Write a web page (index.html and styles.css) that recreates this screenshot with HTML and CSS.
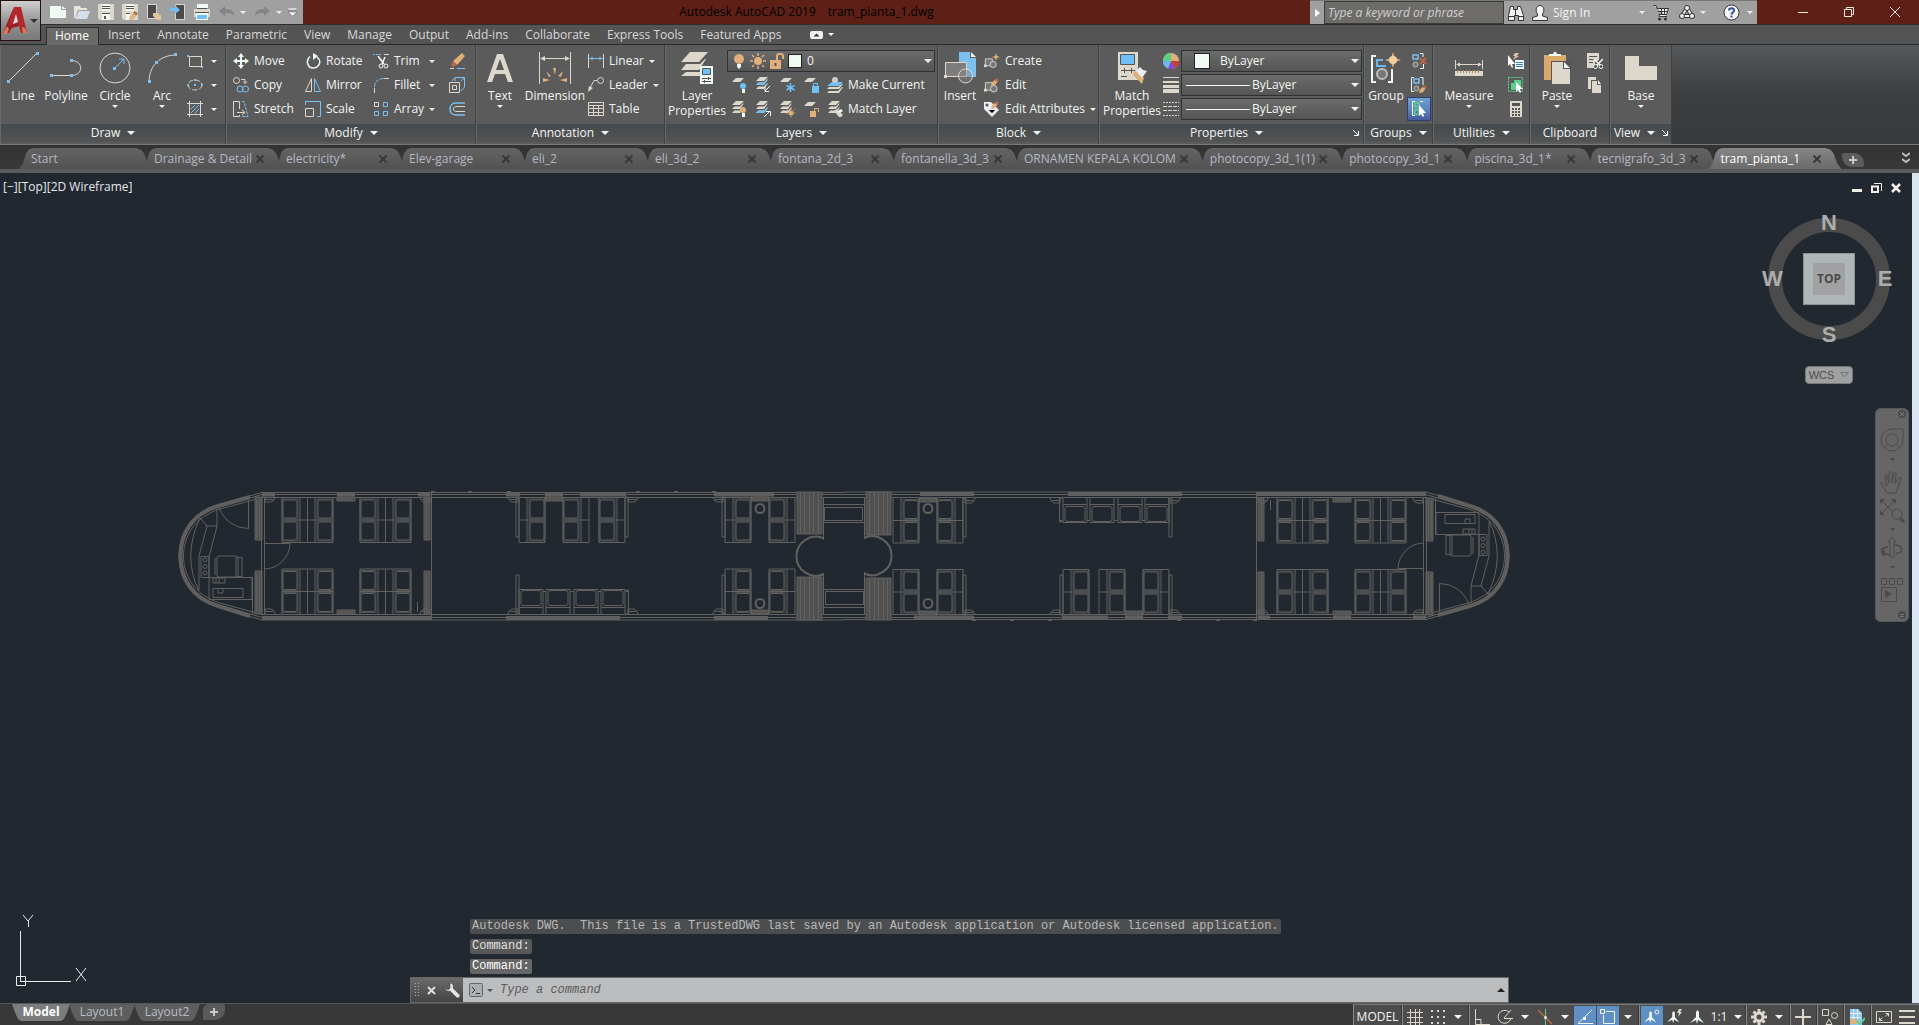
FILE: index.html
```html
<!DOCTYPE html>
<html lang="en">
<head>
    <meta charset="UTF-8">
    <title>Autodesk AutoCAD 2019 - tram_pianta_1.dwg</title>
    <link rel="stylesheet" href="styles.css">
</head>
<body>
    <!-- shared symbols -->
    <svg class="defs" aria-hidden="true">
        <defs>
            <symbol id="sheets" viewBox="0 0 16 16">
                <path fill="#ded7cb" d="M5 0h8L9 4H1zM3.500 5.500H9l3-3h1L9 8H1zM3.500 9.500H9l3-3h1L9 12H1z"/>
            </symbol>
            <symbol id="sheet" viewBox="0 0 16 16"><path fill="#ded7cb" d="M5 1h8L9 5H1z"/></symbol>
            <symbol id="blockbase" viewBox="0 0 16 16">
                <path fill="#777" stroke="#ded7cb" d="M1.500 13.500v-8h8v8z"/><circle cx="10.500" cy="12" r="3.500" fill="#777" stroke="#ded7cb"/><path fill="#ded7cb" d="M0 12h3v3H0z"/>
            </symbol>
            <symbol id="pencil" viewBox="0 0 8 8"><path fill="#b5694a" d="M5 0l3 2-1.500 2-3-2z"/><path fill="#e0b07c" d="M3.500 2l3 2-3 3.500L0 8l.8-3z"/></symbol>
            <symbol id="gbase" viewBox="0 0 16 16">
                <path fill="none" stroke="#7cc0f2" stroke-width="1.500" d="M3 2h5v4H3z"/><circle cx="5.500" cy="11.500" r="2.500" fill="#777" stroke="#bbb"/>
            </symbol>
            <symbol id="person" viewBox="0 0 16 16">
                <path fill="#eefaf2" d="M7.500 1L9 3v5l5 6-6-3-1 4-1-4-6 3 6-6V3z"/>
            </symbol>
        </defs>
    </svg>

    <header class="titlebar">
        <button class="app-button" aria-label="Application menu">
            <svg width="26" height="28" viewBox="0 0 26 28"><path fill="#b3272c" d="M11 0h7l6 26h-6l-2-7-7 2-3 5H0z"/><path fill="#dcdcdc" d="M13 7l2 8-5 2z"/><path fill="#801a1c" d="M11 0l-4 12-2 7 10-3v3l-7 2-3 5H0z" opacity=".6"/><path fill="#d97c5c" d="M1 24l3-5 2 3-2 5H0zM19 20l3 1 2 5h-4z"/></svg>
            <span class="caret"></span>
        </button>
        <div class="quick-access">
            <button aria-label="New"><svg width="16" height="16"><path fill="#eefaf2" d="M0 2h11v4h5v8H0z"/><path fill="#eefaf2" d="M12 2l4 3h-4z"/></svg></button>
            <button aria-label="Open"><svg width="16" height="16"><path fill="#e8e4dc" d="M0 2h6l1 2h6v2H4L1 14H0z"/><path fill="#d5dfec" d="M5 7h11l-3 8H1z"/></svg></button>
            <button aria-label="Save"><svg width="16" height="16"><path fill="#ded7cb" d="M0 0h16v16H2l-2-2z"/><path fill="#eefaf2" d="M4 0h8v7H4zM4 10h8v6H4z"/><path stroke="#555" fill="none" d="M4 2.500h8M4 4.500h8M4 9.500h8"/><path fill="#555" d="M6 12h2v3H6z"/></svg></button>
            <button aria-label="Save As"><svg width="16" height="16"><path fill="#ded7cb" d="M0 0h16v16H2l-2-2z"/><path fill="#eefaf2" d="M4 0h8v7H4zM4 10h4v6H4z"/><path stroke="#555" fill="none" d="M4 2.500h8M4 4.500h8M4 9.500h4"/><use href="#pencil" x="7" y="7" width="9" height="9"/></svg></button>
            <button aria-label="Open from mobile"><svg width="16" height="16"><path fill="#4a4a4a" stroke="#ded7cb" d="M1.500.5h9v14h-9z"/><path fill="#e0c59c" d="M7 9h6v2h2v5h-4l-4-4z"/></svg></button>
            <button aria-label="Save to mobile"><svg width="16" height="16"><path fill="#4a4a4a" stroke="#ded7cb" d="M5.500.5h9v15h-9z"/><path fill="#6fc0f7" d="M0 4h5V1l5 5-5 4V7H0z"/></svg></button>
            <button aria-label="Plot"><svg width="16" height="16"><path fill="#eefaf2" d="M3 0h11v4H3z"/><path fill="#ded7cb" d="M0 5h16v8H0z"/><path fill="#eefaf2" d="M2 9h12v7H2z"/><path fill="#6fc0f7" d="M3 11h10v4H3z"/><path stroke="#555" d="M1 8.500h14M3 4.500h10"/></svg></button>
            <button aria-label="Undo" class="wide"><svg width="16" height="16"><path fill="#858585" d="M0 7l6-5v3c6 0 9 2 9 7-2-3-5-3-9-3v3z"/></svg><span class="caret pale"></span></button>
            <button aria-label="Redo" class="wide"><svg width="16" height="16"><path fill="#858585" d="M15 7L9 2v3c-6 0-9 2-9 7 2-3 5-3 9-3v3z"/></svg><span class="caret pale"></span></button>
            <button aria-label="Customize" class="custom"><svg width="9" height="9"><path fill="#fff" stroke="#555" stroke-width=".5" d="M0 0h9v2H0zM0 4h9L4.500 8z"/></svg></button>
        </div>
        <h1 class="title"><span>Autodesk AutoCAD 2019</span><span>tram_pianta_1.dwg</span></h1>
        <div class="infocenter">
            <button class="collapse" aria-label="Collapse search"><svg width="5" height="8"><path fill="#fff" d="M0 0l5 4-5 4z"/></svg></button>
            <input type="text" placeholder="Type a keyword or phrase" aria-label="Search">
            <button aria-label="Search"><svg width="18" height="16"><path fill="#f2f2f2" stroke="#333" d="M3.500 1.500h3v3h4v-3h3l3 9v5h-5v-5h-4v5h-6v-5z"/><path fill="none" stroke="#333" d="M2 11.500h5M12 11.500h4M8.500 4v6"/></svg></button>
            <button class="signin"><svg width="16" height="16"><path fill="#f2f2f2" stroke="#333" d="M5.500 9C3 6 4 .5 8 .5s5 5.500 2.500 8.500v2l5 1.500v3H.5v-3l5-1.500z"/></svg><span>Sign In</span><span class="caret pale"></span></button>
            <button aria-label="App Store"><svg width="16" height="16"><path fill="#f2f2f2" stroke="#333" d="M.5.500H3l1 3h11.500l-2 6H6l.5 2H14"/><path stroke="#333" d="M5 6.500h9M8.500 4v5M11.500 4v5"/><circle cx="6.500" cy="14" r="1.500" fill="#333"/><circle cx="12.500" cy="14" r="1.500" fill="#333"/></svg></button>
            <button class="connect" aria-label="Stay connected"><svg width="16" height="16"><path fill="none" stroke="#333" stroke-width="4" d="M8 3L3 11h10z"/><path fill="none" stroke="#f2f2f2" stroke-width="2" d="M8 3L3 11h10z"/><g fill="#f2f2f2" stroke="#333"><circle cx="8" cy="3" r="2.500"/><circle cx="3" cy="11" r="2.500"/><circle cx="13" cy="11" r="2.500"/></g></svg><span class="caret pale"></span></button>
            <button class="help" aria-label="Help"><svg width="17" height="17"><circle cx="8.500" cy="8.500" r="7.500" fill="#f4f7fa" stroke="#333"/><path fill="none" stroke="#3b4f8f" stroke-width="2" d="M6 6.500c0-3 5-3 5 0 0 2-2.500 2-2.500 4M8.500 11.500v2"/></svg><span class="caret pale"></span></button>
        </div>
        <div class="window-buttons">
            <button aria-label="Minimize"><svg width="10" height="10"><path stroke="#f2e9e4" d="M0 5.500h10"/></svg></button>
            <button aria-label="Restore"><svg width="10" height="10"><path fill="none" stroke="#f2e9e4" d="M.5 2.500h7v7h-7zM2.500 2V.500h7v7H8"/></svg></button>
            <button aria-label="Close"><svg width="10" height="10"><path stroke="#f2e9e4" d="M0 0l10 10M10 0L0 10"/></svg></button>
        </div>
    </header>

    <nav class="menu">
        <a href="#" class="active">Home</a>
        <a href="#">Insert</a>
        <a href="#">Annotate</a>
        <a href="#">Parametric</a>
        <a href="#">View</a>
        <a href="#">Manage</a>
        <a href="#">Output</a>
        <a href="#">Add-ins</a>
        <a href="#">Collaborate</a>
        <a href="#">Express Tools</a>
        <a href="#">Featured Apps</a>
        <button aria-label="Minimize ribbon"><svg width="13" height="8"><rect width="13" height="8" rx="2" fill="#eee"/><path fill="#333" d="M3.500 5.500l3-3 3 3z"/></svg><span class="caret"></span></button>
    </nav>

    <section class="ribbon">
        <div class="panel draw">
            <div class="panel-body">
                <button class="big"><svg width="32" height="32"><path stroke="#ded7cb" d="M2 29L29 2"/><path fill="#7cc0f2" d="M0 28h3v3H0zM29 0h3v3h-3z"/></svg>Line</button>
                <button class="big"><svg width="32" height="32"><path fill="none" stroke="#ded7cb" d="M2 23.500h19M21 8.500c13 0 13 15 0 15"/><path fill="#7cc0f2" d="M0 22h3v3H0zM20 22h3v3h-3zM20 7h3v3h-3z"/></svg>Polyline</button>
                <button class="big"><svg width="32" height="32"><circle cx="16" cy="16" r="15" fill="none" stroke="#ded7cb"/><path stroke="#7cc0f2" fill="none" d="M16 16l9-9M20 7h5v5"/><path fill="#7cc0f2" d="M14 15h3v3h-3z"/></svg>Circle<span class="caret"></span></button>
                <button class="big"><svg width="32" height="32"><path fill="none" stroke="#ded7cb" d="M3 30C3 14 14 3 30 3"/><path fill="#7cc0f2" d="M2 28h3v3H2zM9 9h3v3H9zM28 1h3v3h-3z"/></svg>Arc<span class="caret"></span></button>
                <div class="stack">
                    <button class="small" aria-label="Rectangle"><svg width="16" height="16"><path fill="none" stroke="#ded7cb" d="M2.500 3.500h12v10h-12z"/><path fill="#7cc0f2" d="M0 2h2v2H0zM14 13h2v2h-2z"/></svg><span class="caret"></span></button>
                    <button class="small" aria-label="Ellipse"><svg width="16" height="16"><ellipse cx="8" cy="8" rx="7" ry="5" fill="none" stroke="#ded7cb" stroke-dasharray="5 2"/><path fill="#7cc0f2" d="M0 7h2v2H0zM7 7h2v2H7zM14 7h2v2h-2zM7 2h2v2H7z"/></svg><span class="caret"></span></button>
                    <button class="small" aria-label="Hatch"><svg width="16" height="16"><path stroke="#ded7cb" d="M0 2.500h16M0 13.500h16M2.500 0v16M13.500 0v16"/><path stroke="#7cc0f2" d="M4 8l4-4M4 12l8-8M8 12l4-4"/></svg><span class="caret"></span></button>
                </div>
            </div>
            <h2>Draw<span class="caret wide-caret"></span></h2>
        </div>

        <div class="panel modify">
            <div class="panel-body">
                <button class="small"><svg width="16" height="16"><path stroke="#eefaf2" stroke-width="2" d="M8 2v12M2 8h12"/><path fill="#eefaf2" d="M8 0l3 4H5zM8 16l3-4H5zM0 8l4-3v6zM16 8l-4-3v6z"/></svg>Move</button>
                <button class="small"><svg width="16" height="16"><path fill="none" stroke="#eefaf2" stroke-width="1.500" d="M12 4c6 5 1 11-4 11S0 8 5 3.500"/><path fill="#eefaf2" d="M8 0l5 3-5 4z"/></svg>Rotate</button>
                <button class="small"><svg width="16" height="16"><path stroke="#7cc0f2" stroke-dasharray="2 1" d="M0 1.500h9"/><path stroke="#ded7cb" d="M11 1.500h5"/><path stroke="#eefaf2" stroke-width="1.500" fill="none" d="M5 3l6 8M12 4l-3 7"/><circle cx="8" cy="13" r="2" fill="none" stroke="#eefaf2"/><circle cx="13" cy="13" r="2" fill="none" stroke="#eefaf2"/></svg>Trim<span class="caret"></span></button>
                <button class="small" aria-label="Erase"><svg width="16" height="16"><path fill="#e0b07c" d="M13 0l3 3-8 9-4-4z"/><path fill="#b5694a" d="M4 8l4 4-4 2-2-2z"/><path stroke="#ded7cb" d="M1 15.500h4"/><path stroke="#7cc0f2" d="M8 15.500h8"/></svg></button>

                <button class="small"><svg width="16" height="16"><g fill="none" stroke="#ded7cb"><circle cx="3.500" cy="3.500" r="3"/><path d="M8 2.500h4v4M10 4.500l2 2 2-2"/></g><g fill="none" stroke="#7cc0f2"><circle cx="7" cy="12" r="3"/><circle cx="12.500" cy="12" r="3"/></g></svg>Copy</button>
                <button class="small"><svg width="16" height="16"><path fill="none" stroke="#ded7cb" d="M6.500 1.500v13h-6z"/><path fill="none" stroke="#7cc0f2" d="M9.500 1.500v13h6z"/></svg>Mirror</button>
                <button class="small"><svg width="16" height="16"><path fill="none" stroke="#ded7cb" d="M1.500 16v-5M11 1.500h5"/><path fill="none" stroke="#7cc0f2" d="M1.500 10c0-5 3-8 9-8.500" stroke-dasharray="4 1"/></svg>Fillet<span class="caret"></span></button>
                <button class="small" aria-label="Explode"><svg width="16" height="16"><path fill="none" stroke="#7cc0f2" d="M3 4l3-3.500h9.500V10L12 14M12 4l3-3M6 1v3"/><path fill="none" stroke="#ded7cb" d="M.5 5.500h10v10H.5zM3.500 8.500h4v4h-4z"/></svg></button>

                <button class="small"><svg width="16" height="16"><path fill="none" stroke="#ded7cb" d="M6.500 8V.500h-6v15h6V14M4 11.500h7M9 9l3 2.500L9 14"/><path fill="none" stroke="#7cc0f2" d="M9 .5h2l4 15H8" stroke-dasharray="3 1"/></svg>Stretch</button>
                <button class="small"><svg width="16" height="16"><path fill="none" stroke="#7cc0f2" d="M.5 4V.500h15v15H12"/><path fill="none" stroke="#ded7cb" d="M.5 7.500h8v8h-8z"/></svg>Scale</button>
                <button class="small"><svg width="16" height="16"><path fill="none" stroke="#ded7cb" d="M1.500 1.500h4v4h-4z"/><path fill="none" stroke="#7cc0f2" d="M10.500 1.500h4v4h-4zM1.500 10.500h4v4h-4zM10.500 10.500h4v4h-4z"/></svg>Array<span class="caret"></span></button>
                <button class="small" aria-label="Offset"><svg width="16" height="16"><path fill="none" stroke="#7cc0f2" stroke-width="1.500" d="M16 2H7C-1 2-1 14 7 14h9"/><path fill="none" stroke="#ded7cb" d="M16 5.500H8c-5 0-5 5 0 5h8"/></svg></button>
            </div>
            <h2>Modify<span class="caret wide-caret"></span></h2>
        </div>

        <div class="panel annotation">
            <div class="panel-body">
                <button class="big"><svg width="32" height="32"><path fill="#ded7cb" d="M13 2h6l10 28h-5l-3-8H11l-3 8H3zM16 7l-4 11h8z"/></svg>Text<span class="caret"></span></button>
                <button class="big"><svg width="32" height="32"><path stroke="#ded7cb" d="M.5 0v32M31.500 0v32M2 6.500h28"/><path fill="#ded7cb" d="M1 6.500L6 4v5zM31 6.500L26 4v5z"/><path fill="#e0b07c" d="M14 16h3l-1 7zM7 19l5 5-2 1zM24 19l-5 5 3 1zM4 26l7 2-7 2zM28 26l-7 2 7 2z"/></svg>Dimension</button>
                <div class="stack">
                    <button class="small"><svg width="16" height="16"><path stroke="#ded7cb" d="M.5 1v14M15.500 1v14"/><path stroke="#7cc0f2" d="M1 5.500h14M4 3.500v4M12 3.500v4"/></svg>Linear<span class="caret"></span></button>
                    <button class="small"><svg width="16" height="16"><circle cx="12.500" cy="3.500" r="3" fill="none" stroke="#ded7cb"/><path fill="none" stroke="#ded7cb" d="M9 3.500H6L2 11"/><path fill="#ded7cb" d="M0 15l1-6 4 2z"/></svg>Leader<span class="caret"></span></button>
                    <button class="small"><svg width="16" height="16"><path fill="none" stroke="#ded7cb" d="M.5 1.500h15v13H.5zM0 4.500h16M0 7.500h16M0 11.500h16M5.500 4v10M10.500 4v10"/></svg>Table</button>
                </div>
            </div>
            <h2>Annotation<span class="caret wide-caret"></span></h2>
        </div>

        <div class="panel layers">
            <div class="panel-body">
                <button class="big"><svg width="32" height="32"><path fill="#ded7cb" d="M9 0h18l-9 10H0zM5 12h14l5-5h1L18 18H0zM5 20h14v4H0z"/><path fill="#eefaf2" d="M19 14h13v18H19z"/><path fill="#6fc0f7" stroke="#555" d="M21.500 16.500h8v6h-8z"/><path stroke="#555" fill="none" d="M21 26.500h9M21 29.500h9M27.500 25v3M23.500 28v3"/></svg>Layer<br>Properties</button>
                <div class="layer-tools">
                    <label class="combo">
                        <svg width="16" height="16"><circle cx="8" cy="6" r="5" fill="#e0b07c"/><path fill="#eefaf2" d="M6 11h4v3l-2 2-2-2z"/></svg>
                        <svg width="16" height="16"><circle cx="8" cy="8" r="4" fill="#e0b07c"/><path stroke="#e0b07c" stroke-width="1.500" d="M8 0v3M8 13v3M0 8h3M13 8h3M2 2l2 2M12 12l2 2M14 2l-2 2M4 12l-2 2"/></svg>
                        <svg width="16" height="16"><path fill="#e0b07c" d="M1 7h11v9H1z"/><path fill="none" stroke="#e0b07c" stroke-width="2" d="M8 7V3c0-3 6-3 6 0v3"/><path stroke="#555" stroke-width="2" d="M6.500 10v3"/></svg>
                        <i class="swatch"></i>
                        <select aria-label="Layer"><option>0</option></select>
                        <span class="caret wide-caret"></span>
                    </label>
                    <div class="icon-row">
                        <button aria-label="Layer off"><svg width="16" height="16"><use href="#sheet" width="16" height="16"/><circle cx="12" cy="9" r="3" fill="#6fc0f7"/><path fill="#eefaf2" d="M11 12h3v4h-3z"/></svg></button>
                        <button aria-label="Isolate"><svg width="16" height="16"><use href="#sheets" width="16" height="16"/><path fill="#6fc0f7" d="M3.500 5.500H9l3-3h1L9 8H1z"/><path fill="none" stroke="#eefaf2" d="M15 9l-5 5M10 10v4.500h4"/></svg></button>
                        <button aria-label="Freeze"><svg width="16" height="16"><use href="#sheet" width="16" height="16"/><path stroke="#6fc0f7" stroke-width="1.500" d="M11.500 6v9M7.500 8.500l8 4.500M15.500 8.500l-8 4.500"/></svg></button>
                        <button aria-label="Lock"><svg width="16" height="16"><use href="#sheet" width="16" height="16"/><path fill="#6fc0f7" d="M9 9h7v7H9z"/><path fill="none" stroke="#6fc0f7" d="M10.500 9V6.500h4V9"/></svg></button>
                        <button class="labelled"><svg width="16" height="16"><path fill="#6fc0f7" d="M5 5h11l-4 4H0z"/><path fill="#ded7cb" d="M2 10h9l4-3h1l-4 5H0zM2 14h9l4-4h1l-4 6H0z"/><circle cx="8" cy="3" r="3" fill="#ccc"/></svg>Make Current</button>
                    </div>
                    <div class="icon-row">
                        <button aria-label="Layers on"><svg width="16" height="16"><use href="#sheets" width="16" height="16"/><circle cx="12" cy="9" r="3" fill="#e0b07c"/><path fill="#eefaf2" d="M11 12h3v4h-3z"/></svg></button>
                        <button aria-label="Unisolate"><svg width="16" height="16"><use href="#sheets" width="16" height="16"/><path fill="#6fc0f7" d="M3.500 9.500H9l3-3h1L9 12H1z"/><path fill="none" stroke="#eefaf2" d="M9 16l5-5M11 10.500h4.500V15"/></svg></button>
                        <button aria-label="Thaw"><svg width="16" height="16"><use href="#sheets" width="16" height="16"/><circle cx="12" cy="12" r="2.500" fill="#e0b07c"/><path stroke="#e0b07c" d="M12 7v2M12 15v1M7 12h2M15 12h1M8.500 8.500l1 1M15.500 8.500l-1 1"/></svg></button>
                        <button aria-label="Unlock"><svg width="16" height="16"><use href="#sheet" width="16" height="16"/><path fill="#e0b07c" d="M7 10h6v6H7z"/><path fill="none" stroke="#e0b07c" d="M11.500 10V7.500h4V11"/></svg></button>
                        <button class="labelled"><svg width="16" height="16"><use href="#sheets" width="16" height="16"/><path fill="#ded7cb" d="M7 10l3-2 6 6-2 2h-2z"/><path fill="#eefaf2" d="M11 10l3-2 2 2-3 2z"/></svg>Match Layer</button>
                    </div>
                </div>
            </div>
            <h2>Layers<span class="caret wide-caret"></span></h2>
        </div>

        <div class="panel block">
            <div class="panel-body">
                <button class="big"><svg width="32" height="32"><path fill="#7cc0f2" d="M15 0h11v6h6v19H15z"/><path fill="#eefaf2" d="M27 0l5 5h-5z"/><path fill="#7d7d7d" stroke="#ded7cb" d="M1.500 10.500h21v14h-21z"/><circle cx="21.500" cy="24" r="7" fill="#8887" stroke="#ded7cb"/><path fill="#ded7cb" d="M0 23h3v3H0z"/></svg>Insert</button>
                <div class="stack">
                    <button class="small"><svg width="16" height="16"><use href="#blockbase" width="14" height="16"/><path fill="#e0b07c" d="M12 0l1 3 3 1-3 1-1 3-1-3-3-1 3-1z"/></svg>Create</button>
                    <button class="small"><svg width="16" height="16"><use href="#blockbase" width="15" height="16"/><use href="#pencil" x="7" y="1" width="8" height="8"/></svg>Edit</button>
                    <button class="small"><svg width="16" height="16"><path fill="#e9eef5" d="M0 1h7l8 8-7 7-8-8z"/><circle cx="3" cy="4" r="1.500" fill="#555"/><path stroke="#555" d="M5 9l3 3 3-3"/><use href="#pencil" x="7" y="0" width="8" height="8"/></svg>Edit Attributes<span class="caret"></span></button>
                </div>
            </div>
            <h2>Block<span class="caret wide-caret"></span></h2>
        </div>

        <div class="panel properties">
            <div class="panel-body">
                <button class="big"><svg width="32" height="32"><path fill="#ded7cb" d="M2 0h20v28H2z"/><path fill="#6fc0f7" stroke="#555" d="M4.500 2.500h14v10h-14z"/><path stroke="#555" fill="none" d="M5 18.500h14M5 24.500h6M8.500 16v5M15.500 16v5"/><path fill="#e0b07c" d="M16 22l4-4 8 8-2 6z"/><path fill="#e9eef5" d="M20 19l4-4 3 3 4 1-5 7z"/></svg>Match<br>Properties</button>
                <div class="prop-rows">
                    <svg width="16" height="16"><circle cx="8" cy="8" r="8" fill="#e0b07c"/><path fill="#5bd08a" d="M8 8L1 4C4-1 8 0 8 0z"/><path fill="#5bd08a" d="M8 8L0 10C0 6 0 5 2 3z"/><path fill="#6fb6ee" d="M8 8l-3 7.400C2 14 0 12 0 8z"/><path fill="#7a4be0" d="M8 8l-3 7.400c3 1 5 .6 7-.4z"/><path fill="#c43c34" d="M8 8h8c0 3-1 5-4 7z"/></svg>
                    <label class="combo"><i class="swatch"></i><select aria-label="Object color"><option>ByLayer</option></select><span class="caret wide-caret"></span></label>
                    <svg width="16" height="16"><path fill="#ded7cb" d="M0 0h16v1H0zM0 4h16v2H0zM0 8h16v3H0zM0 12h16v4H0z"/></svg>
                    <label class="combo"><i class="line"></i><select aria-label="Lineweight"><option>ByLayer</option></select><span class="caret wide-caret"></span></label>
                    <svg width="16" height="16"><path stroke="#ded7cb" stroke-dasharray="2 1" d="M0 1.500h16M0 14.500h16"/><path stroke="#ded7cb" stroke-dasharray="4 1" d="M0 5.500h16M0 9.500h16"/></svg>
                    <label class="combo"><i class="line"></i><select aria-label="Linetype"><option>ByLayer</option></select><span class="caret wide-caret"></span></label>
                </div>
            </div>
            <h2>Properties<span class="caret wide-caret"></span><svg class="launcher" width="6" height="6"><path fill="none" stroke="#fff" d="M0 0l5 5M5.500 1v4.500H1"/></svg></h2>
        </div>

        <div class="panel groups">
            <div class="panel-body">
                <button class="big"><svg width="32" height="32"><path fill="none" stroke="#eefaf2" stroke-width="2" d="M6 4H2v26h4M18 30h4V17"/><path fill="none" stroke="#6fb6ee" stroke-width="2" d="M16 14H7V8h6"/><circle cx="12" cy="22" r="5" fill="#777" stroke="#bbb" stroke-width="2"/><path fill="#e0b07c" d="M23 0l2 6 6 2-6 2-2 6-2-6-6-2 6-2z"/><circle cx="23" cy="8" r="4" fill="#f0d0a0"/></svg>Group</button>
                <div class="stack">
                    <button class="small" aria-label="Ungroup"><svg width="16" height="16"><use href="#gbase" width="16" height="16" x="-1"/><path fill="none" stroke="#eefaf2" d="M9 .5h3V4M12.500 11v4.500H9"/><path stroke="#b5694a" stroke-width="2" d="M9 5l6 6M15 5l-6 6"/></svg></button>
                    <button class="small" aria-label="Group edit"><svg width="16" height="16"><use href="#gbase" width="16" height="16"/><path fill="none" stroke="#eefaf2" d="M3 .5H.500v14H3M9 .5h3V8"/><use href="#pencil" x="8" y="8" width="8" height="8"/></svg></button>
                    <button class="small selected" aria-label="Group selection"><svg width="16" height="16"><path fill="none" stroke="#5bd08a" stroke-width="1.500" d="M4 2h4v4H4z"/><circle cx="6" cy="11" r="2.500" fill="none" stroke="#5bd08a" stroke-width="1.500"/><path fill="none" stroke="#eefaf2" d="M4 .5H1.500v14H4M9 .5h3"/><path fill="#fff" d="M8 4v11l2-2 2 3 1-1-1-3h3z"/></svg></button>
                </div>
            </div>
            <h2>Groups<span class="caret wide-caret"></span></h2>
        </div>

        <div class="panel utilities">
            <div class="panel-body">
                <button class="big"><svg width="32" height="32"><path stroke="#ded7cb" d="M2.500 8v9M29.500 8v9M4 12.500h24"/><path fill="#ded7cb" d="M3 12.500l4-2v4zM29 12.500l-4-2v4zM2 19h28v5H2z"/><path stroke="#a88a5e" stroke-dasharray="1 2" stroke-width="3" d="M4 19.500h24"/></svg>Measure<span class="caret"></span></button>
                <div class="stack">
                    <button class="small" aria-label="Quick select"><svg width="16" height="16"><path fill="#fff" d="M0 2v11l2-2 2 4 1-1-1-3h3z"/><path fill="#e0c0a0" d="M7 0h4L9 3h2L5 7l2-4H5z"/><path fill="#eefaf2" d="M7 7h9v9H7z"/><path stroke="#3f7fc0" d="M8 9.500h7M8 11.500h7M8 13.500h7"/></svg></button>
                    <button class="small" aria-label="Select all"><svg width="16" height="16"><path fill="none" stroke="#5bd08a" stroke-dasharray="2 1" d="M.5.500h14v14H.500z"/><path fill="#5bd08a" d="M3 6h3V3h7v7H9v3H3z"/><path fill="#fff" d="M8 5v10l2-2 2 3 1-1-1-3h3z"/></svg></button>
                    <button class="small" aria-label="Calculator"><svg width="16" height="16"><path fill="#ded7cb" d="M2 0h12v16H2z"/><path fill="#555" d="M4 2h8v3H4zM4 7h2v2H4zM7 7h2v2H7zM10 7h2v2h-2zM4 10h2v2H4zM7 10h2v2H7zM10 10h2v2h-2zM4 13h2v2H4zM7 13h2v2H7zM10 13h2v2h-2z"/></svg></button>
                </div>
            </div>
            <h2>Utilities<span class="caret wide-caret"></span></h2>
        </div>

        <div class="panel clipboard">
            <div class="panel-body">
                <button class="big"><svg width="32" height="32"><path fill="#dba96c" d="M3 3h22v25H3z"/><path fill="#eefaf2" d="M8 4V2h4l1-2h2l1 2h4v2z"/><path fill="#555" d="M10 9h20v23H10z"/><path fill="#ded7cb" d="M11 10h11v7h7v15H11z"/><path fill="#eefaf2" d="M23 10l6 6h-6z"/></svg>Paste<span class="caret"></span></button>
                <div class="stack">
                    <button class="small" aria-label="Cut"><svg width="16" height="16"><path fill="#ded7cb" d="M0 0h12v7l-4 2v6H0z"/><path stroke="#555" d="M2 3.500h8M2 6.500h6M2 9.500h4"/><path stroke="#eefaf2" stroke-width="1.500" d="M7 6l7 7M16 6l-7 7"/><circle cx="8.500" cy="13.500" r="2" fill="#555" stroke="#eefaf2"/><circle cx="14" cy="13.500" r="2" fill="#555" stroke="#eefaf2"/></svg></button>
                    <button class="small" aria-label="Copy"><svg width="16" height="16"><path fill="#ded7cb" d="M1 0h8v3H4v9H1z"/><path fill="#ded7cb" d="M5 4h5v4h4v8H5z"/><path fill="#eefaf2" d="M11 3l3 4h-3z"/></svg></button>
                </div>
            </div>
            <h2>Clipboard</h2>
        </div>

        <div class="panel view">
            <div class="panel-body">
                <button class="big"><svg width="32" height="32"><path fill="#ded7cb" d="M0 4h14v10h18v14H0z"/></svg>Base<span class="caret"></span></button>
            </div>
            <h2>View<span class="caret wide-caret"></span><svg class="launcher" width="6" height="6"><path fill="none" stroke="#fff" d="M0 0l5 5M5.500 1v4.500H1"/></svg></h2>
        </div>
    </section>

    <nav class="file-tabs">
        <a href="#" class="no-close">Start</a>
        <a href="#">Drainage &amp; Detail<i></i></a>
        <a href="#">electricity*<i></i></a>
        <a href="#">Elev-garage<i></i></a>
        <a href="#">eli_2<i></i></a>
        <a href="#">eli_3d_2<i></i></a>
        <a href="#">fontana_2d_3<i></i></a>
        <a href="#">fontanella_3d_3<i></i></a>
        <a href="#">ORNAMEN KEPALA KOLOM<i></i></a>
        <a href="#">photocopy_3d_1(1)<i></i></a>
        <a href="#">photocopy_3d_1<i></i></a>
        <a href="#">piscina_3d_1*<i></i></a>
        <a href="#">tecnigrafo_3d_3<i></i></a>
        <a href="#" class="active">tram_pianta_1<i></i></a>
        <button class="add-tab" aria-label="New drawing"></button>
        <button class="more-tabs" aria-label="More tabs"><svg width="8" height="12"><path fill="none" stroke="#bbb" stroke-width="2" d="M0 1l4 3 4-3M0 7l4 3 4-3"/></svg></button>
    </nav>

    <main class="workspace">
        <div class="view-controls"><a href="#">[&minus;]</a><a href="#">[Top]</a><a href="#">[2D Wireframe]</a></div>

        <svg class="plan" width="1340" height="136" viewBox="174 488 1340 136">
            <defs>
                <g id="seat"><rect x="1" y="1" width="14" height="18" rx="2"/><path d="M0 0h16v20H0z" stroke-opacity=".7"/></g>
                <g id="quad">
                    <use href="#seat" y="2"/><use href="#seat" y="24"/><use href="#seat" x="35" y="2"/><use href="#seat" x="35" y="24"/>
                    <path d="M0 0v45.500h51V0M18 0v45M25.500 0v45M33 0v45M0 23h51"/>
                </g>
                <g id="pair">
                    <use href="#seat" x="10" y="2"/><use href="#seat" x="10" y="24"/>
                    <path d="M0 0v45.500h26V0M8 0v45M0 23h26"/>
                </g>
                <g id="single"><path d="M0 0h24v25H0zM0 18h24M24 2h3"/><rect x="2" y="1" width="20" height="15" rx="2"/></g>
                <g id="hook"><path d="M0 0v5h6q4-1 4-5M0 2.500h8"/></g>
                <g id="radiator"><path class="solid" d="M0 0h18v4H0z"/><path d="M2 0v4M5 0v4M8 0v4M11 0v4M14 0v4"/></g>
                <g id="half">
                    <!-- shell -->
                    <path d="M844 492.500H262L218 505C190 513 179 535 179 556s11 43 39 51l44 13h582"/>
                    <path d="M844 494.500H262L219 507C192 515 181 536 181 556s11 41 38 49l43 12.500h582"/>
                    <path d="M844 497.500H262L220 509C194 517 183.500 537 183.500 556s10.500 39 36.500 47l42 11.500h582"/>
                    <path class="wall" d="M250 497L218 506C191 514 180.500 535 180.500 556s10.500 42 37.500 50l32 10"/>
                    <path class="wall" d="M262 494.500h13M337 494.500h18M418 494.500h12M506 494.500h14M545 494.500h18M580 494.500h46M714 494.500h60M262 618h170M506 618h14M520 618h100M714 618h54"/>
                    <path d="M431 491.500h4M468 491.500h4M507 491.500h4M636 491.500h4M674 491.500h4M712 491.500h4"/>
                    <!-- driver cabin -->
                    <path d="M200 518Q182 556 199 591M200 518l7 8h10M217 509v17l-8 31v42M207 526l-8 30v34M201 556.500h8v21h-8zM209 577.500h43v22h-43M252.500 577v37M213 588.500h30v9h-30zM213 578h12v5h-12zM218 589v4h5v-4"/>
                    <circle cx="205" cy="560" r="2"/><circle cx="205" cy="566.500" r="2"/><circle cx="205" cy="573" r="2"/>
                    <rect x="217" y="556" width="21" height="21" rx="2"/><path d="M215 558v17M238 557.500h4v19h-4M236 557v20M216 579v4M219 579v4"/>
                    <path d="M248.500 500v28.500A30 30 0 0 1 219.500 508"/>
                    <!-- partitions -->
                    <path class="solid" d="M255 497h7v43h-7zM255 571h7v43h-7zM424 497h6v43h-6zM424 571h6v43h-6z"/>
                    <path d="M261.500 497v117M264.500 497v117M431.500 493v125M264.500 543.500H290A26 26 0 0 1 264.500 569"/>
                    <path d="M256.500 500v38M259.500 500v38M256.500 574v38M259.500 574v38M426.500 500v38M426.500 574v38M417.500 602v10"/>
                    <use href="#quad" x="282" y="497"/><use href="#quad" x="360" y="497"/>
                    <use href="#quad" transform="translate(282 614.500) scale(1 -1)"/><use href="#quad" transform="translate(360 614.500) scale(1 -1)"/>
                    <use href="#radiator" x="337" y="497"/><use href="#radiator" x="337" y="610"/><use href="#radiator" x="545" y="497"/>
                    <use href="#radiator" x="751" y="497"/><use href="#radiator" x="751" y="610"/>
                    <!-- passenger area -->
                    <use href="#pair" x="519" y="497"/><use href="#pair" transform="translate(589 497) scale(-1 1)"/><use href="#pair" transform="translate(625 497) scale(-1 1)"/>
                    <use href="#pair" x="725" y="497"/><use href="#pair" transform="translate(795 497) scale(-1 1)"/>
                    <use href="#pair" transform="translate(725 614.500) scale(1 -1)"/><use href="#pair" transform="translate(795 614.500) scale(-1 -1)"/>
                    <use href="#single" x="519" y="589.500"/><use href="#single" x="546" y="589.500"/><use href="#single" x="574" y="589.500"/><use href="#single" x="601" y="589.500"/>
                    <path d="M516 497h3v40h-3zM516 575h3v39h-3zM625 497h3v40h-3zM722 497h3v40h-3zM722 575h3v39h-3zM625.500 590h3v24h-3"/>
                    <use href="#hook" x="265" y="497"/><use href="#hook" transform="translate(430 497) scale(-1 1)"/><use href="#hook" transform="translate(518 497) scale(-1 1)"/>
                    <use href="#hook" x="628" y="497"/><use href="#hook" transform="translate(723 497) scale(-1 1)"/>
                    <use href="#hook" transform="translate(265 614) scale(1 -1)"/><use href="#hook" transform="translate(430 614) scale(-1 -1)"/><use href="#hook" transform="translate(518 614) scale(-1 -1)"/>
                    <use href="#hook" transform="translate(628 614) scale(1 -1)"/><use href="#hook" transform="translate(723 614) scale(-1 -1)"/>
                    <circle cx="760" cy="508.500" r="4.500" class="bold"/><circle cx="760" cy="603.500" r="4.500" class="bold"/>
                    <!-- articulated joint -->
                    <path class="solid" d="M797 492h25v42h-25zM797 577h25v43h-25z"/>
                    <path d="M800.500 492v42M804.500 492v42M809.500 492v42M813.500 492v42M818.500 492v42M800.500 577v43M804.500 577v43M809.500 577v43M813.500 577v43M818.500 577v43"/>
                    <path class="bold" d="M824 538.500A19.500 19.500 0 1 0 824 574"/>
                    <path d="M823.500 497v43M823.500 573v41M824 589.500h41M824 607.500h41M825.500 591.500h38v13h-38z"/>
                </g>
            </defs>
            <use href="#half"/>
            <use href="#half" transform="rotate(180 844 556)"/>
        </svg>

        <div class="doc-buttons">
            <button aria-label="Minimize drawing"><svg width="11" height="10"><path fill="#f4efe6" d="M1 6h10v3H1z"/></svg></button>
            <button aria-label="Restore drawing"><svg width="11" height="10"><path fill="none" stroke="#f4efe6" stroke-width="2" d="M1 3.500h6V9H1z"/><path fill="none" stroke="#f4efe6" d="M3 .5h7.500V8"/></svg></button>
            <button aria-label="Close drawing"><svg width="10" height="10"><path stroke="#f4efe6" stroke-width="2.500" d="M1 1l8 8M9 1L1 9"/></svg></button>
        </div>

        <div class="viewcube">
            <span class="compass n">N</span><span class="compass s">S</span><span class="compass w">W</span><span class="compass e">E</span>
            <button class="cube"><span>TOP</span></button>
        </div>
        <button class="wcs">WCS<svg width="9" height="6"><path fill="none" stroke="#777" d="M.5.500h8L4.500 5z"/></svg></button>

        <aside class="navbar">
            <svg width="32" height="212">
                <g fill="#4c4c4c"><circle cx="26" cy="5" r="4"/><circle cx="26" cy="206" r="4"/></g>
                <path stroke="#777" d="M24 3l4 4M28 3l-4 4M24 205.500h4M24 207.500h4"/>
                <g fill="none" stroke="#4a4a4a">
                    <path d="M16 20h11v11a11 11 0 1 1-11-11z"/><circle cx="16" cy="31" r="6"/><path d="M8 39l4-4M24 39l-4-4"/>
                    <path d="M11 84l-6-9c-1-2 1-2 2-1l4 3-2-10c0-2 2-2 2 0l2 7V64c0-2 3-2 3 0v10l2-9c1-2 3-1 2 1l-1 9 4-6c1-1 3 0 2 1l-3 8-2 6z"/>
                    <path d="M5 91l14 14M19 91L5 105"/><circle cx="21" cy="105" r="5" fill="#666"/><path stroke-width="3" d="M24 109l4 4"/>
                    <path d="M14 148v-15h-2l4-5 4 5h-2v15z"/><path stroke-width="1.500" d="M14 146c-8-1-10-4-7-7M18 136c8 0 12 6 2 9M12 138c-7 1-9 4-3 6"/>
                    <path d="M5.500 169.500h5v6h-5zM13.500 169.500h5v6h-5zM21.500 169.500h5v6h-5zM5.500 178.500h15v14h-15z"/>
                </g>
                <path fill="#4a4a4a" d="M4 90h5l-5 5zM20 90h-5l5 5zM4 106h5l-5-5zM9 140v8l-4-4zM9 181v8l7-4zM14 49h5l-2.500 3zM14 119h5l-2.500 3zM14 157h5l-2.500 3z"/>
            </svg>
        </aside>

        <svg class="ucs" width="80" height="78">
            <path fill="none" stroke="#e8eaec" d="M.5 62.500h9v9h-9zM4.500 67V17M4 67.500h51M7 1l5 6 5-6M12.500 7v6M60 54l10 13M70 54L60 67"/>
        </svg>

        <div class="command-area">
            <div class="history">
                <p class="old">Autodesk DWG.&nbsp; This file is a TrustedDWG last saved by an Autodesk application or Autodesk licensed application.</p>
                <p>Command:</p>
                <p class="new">Command:</p>
            </div>
            <div class="command-line">
                <div class="grip"></div>
                <button aria-label="Close command line"><svg width="9" height="9"><path stroke="#ddd" stroke-width="2" d="M1 1l7 7M8 1L1 8"/></svg></button>
                <button aria-label="Customize command line"><svg width="15" height="15"><path fill="#e4e4e4" stroke="#333" stroke-width=".5" d="M5 0c3 0 4 3 3 5l7 7c0 2-1 3-3 3L5 8C2 9 0 7 0 5l3 2 2-2z"/></svg></button>
                <div class="prompt">
                    <svg width="14" height="14"><rect x=".5" y=".5" width="13" height="13" rx="1" fill="#aab0b2" stroke="#666"/><path fill="none" stroke="#333" d="M3 4l3 3-3 3M7 10.500h4"/></svg>
                    <span class="caret dark"></span>
                    <input type="text" placeholder="Type a command" aria-label="Command">
                    <span class="up-caret"></span>
                </div>
            </div>
        </div>
    </main>

    <footer class="bottombar">
        <nav class="layout-tabs">
            <a href="#" class="active">Model</a>
            <a href="#">Layout1</a>
            <a href="#">Layout2</a>
            <button class="add-layout" aria-label="New layout"></button>
        </nav>
        <div class="statusbar">
            <div class="group"><button class="model">MODEL</button></div>
            <div class="group">
                <button aria-label="Grid"><svg width="16" height="16"><path stroke="#ded7cb" d="M0 3.500h16M0 8.500h16M0 13.500h16M3.500 0v16M8.500 0v16M12.500 0v16"/></svg></button>
                <button aria-label="Snap"><svg width="14" height="14"><path stroke="#ded7cb" stroke-width="2" stroke-dasharray="2 4" d="M0 1h14M0 7h14M0 13h14"/></svg></button>
                <button class="drop" aria-label="Snap settings"><span class="caret wide-caret"></span></button>
            </div>
            <div class="group">
                <button aria-label="Ortho"><svg width="16" height="16"><path fill="none" stroke="#ded7cb" d="M1.500 0v15.500H16M2 10.500h5V15"/></svg></button>
                <button aria-label="Polar"><svg width="16" height="16"><path fill="none" stroke="#ded7cb" d="M12 3a6.500 6.500 0 1 0 2 6M7 9l7-8M7 9.500h9"/></svg></button>
                <button class="drop" aria-label="Polar settings"><span class="caret wide-caret"></span></button>
                <button aria-label="Isodraft"><svg width="16" height="16"><path stroke="#b5694a" stroke-width="1.500" d="M1 1l14 14"/><path stroke="#5bd08a" d="M8.500 0v16"/><circle cx="8.500" cy="8.500" r="1.500" fill="#eee"/></svg></button>
                <button class="drop" aria-label="Isodraft settings"><span class="caret wide-caret"></span></button>
                <button class="on" aria-label="Object snap tracking"><svg width="16" height="16"><path fill="none" stroke="#eefaf2" d="M15 1L1 14.500h15"/><path fill="#eefaf2" d="M6 8h3v3H6z"/></svg></button>
                <button class="on" aria-label="Object snap"><svg width="16" height="16"><path fill="none" stroke="#eefaf2" d="M.5.500h4v4h-4zM6 2.500h8.500v12H3.500V6"/></svg></button>
                <button class="drop" aria-label="Snap modes"><span class="caret wide-caret"></span></button>
            </div>
            <div class="group">
                <button class="on" aria-label="Annotation visibility"><svg width="16" height="16"><use href="#person" width="14" height="16"/><circle cx="13" cy="3" r="2" fill="none" stroke="#eee"/></svg></button>
                <button aria-label="Autoscale"><svg width="16" height="16"><use href="#person" width="14" height="16"/><path fill="#ded7cb" d="M12 0l-2 4h2l-1 4 4-5h-2l2-3z"/></svg></button>
                <button aria-label="Annotation scale"><svg width="16" height="16"><use href="#person" width="16" height="16"/></svg></button>
                <button class="scale">1:1<span class="caret wide-caret"></span></button>
            </div>
            <div class="group">
                <button aria-label="Workspace"><svg width="16" height="16"><circle cx="8" cy="8" r="4" fill="none" stroke="#ded7cb" stroke-width="3"/><path stroke="#ded7cb" stroke-width="3" d="M8 0v3M8 13v3M0 8h3M13 8h3M2.500 2.500l2 2M11.500 11.500l2 2M13.500 2.500l-2 2M4.500 11.500l-2 2"/></svg></button>
                <button class="drop" aria-label="Workspace settings"><span class="caret wide-caret"></span></button>
            </div>
            <div class="group"><button aria-label="Annotation monitor"><svg width="16" height="16"><path stroke="#ded7cb" stroke-width="2" d="M8 0v16M0 8h16"/></svg></button></div>
            <div class="group"><button aria-label="Isolate objects"><svg width="16" height="16"><g fill="none" stroke="#ded7cb"><path d="M.5.500h6v6h-6zM7 10l3 5.500H4z"/><circle cx="12.500" cy="6.500" r="3"/></g></svg></button></div>
            <div class="group"><button aria-label="Graphics performance"><svg width="16" height="16"><path fill="#8ccbf7" d="M1 0h8l4 4v12H1z"/><path fill="#e0b07c" d="M1 10h7v5H1z"/><path stroke="#eee" d="M1 4.500h11M1 8.500h11M4.500 0v10M8.500 0v10"/><path fill="none" stroke="#5bd08a" stroke-width="2" d="M8 12l3 3 5-6"/></svg></button></div>
            <div class="group last">
                <button aria-label="Clean screen"><svg width="16" height="14"><path fill="none" stroke="#ded7cb" d="M.5 1.500h15v11H.500zM3.500 7.500v3h3M9.500 3.500h3v3M3.500 10.500l3-3M12.500 3.500l-3 3"/></svg></button>
                <button aria-label="Customization"><svg width="16" height="16"><path stroke="#ded7cb" stroke-width="2" d="M0 2h16M0 8h16M0 14h16"/></svg></button>
            </div>
        </div>
    </footer>
</body>
</html>
```

FILE: styles.css
```css
* {
    box-sizing: border-box;
}

html, body {
    margin: 0;
    height: 100%;
}

body {
    display: flex;
    flex-direction: column;
    overflow: hidden;
    background: #212830;
    color: #f2f5f2;
    font-family: "Open Sans", "Noto Sans", sans-serif;
    font-size: 12px;
    line-height: 16px;
}

button, input, select {
    font: inherit;
    color: inherit;
    margin: 0;
    padding: 0;
    border: none;
    background: none;
}

button {
    display: flex;
    align-items: center;
    justify-content: center;
    white-space: nowrap;
}

a {
    color: inherit;
    text-decoration: none;
}

h1, h2, p {
    margin: 0;
    font-size: 12px;
    font-weight: normal;
}

svg {
    flex: none;
    display: block;
}

.defs {
    position: absolute;
    width: 0;
    height: 0;
}

.caret {
    flex: none;
    width: 0;
    height: 0;
    border: 3px solid transparent;
    border-top: 3px solid #f2f5f2;
    border-bottom: none;
}

.caret.pale {
    border-top-color: #eee;
}

.caret.dark {
    border-top-color: #555;
}

.wide-caret {
    border-width: 4px 4px 0;
}

/* title bar */
.titlebar {
    flex: none;
    display: flex;
    height: 25px;
    background: #5e2016;
    border-bottom: 1px solid #2e2e2e;
}

.app-button {
    position: relative;
    z-index: 2;
    width: 41px;
    height: 41px;
    gap: 1px;
    border: 1px solid #2a0f10;
    background: linear-gradient(#cfcfcf, #8d8d8d 60%, #7a7a7a);
}

.app-button .caret {
    border-top-color: #333;
    border-width: 4px 4px 0;
}

.quick-access {
    display: flex;
    width: 262px;
    padding-left: 5px;
    background: #a0a0a0;
}

.quick-access button {
    width: 24px;
}

.quick-access .wide {
    width: 36px;
    gap: 5px;
}

.quick-access .custom {
    width: 12px;
}

.title {
    flex: 1;
    display: flex;
    justify-content: center;
    gap: 12px;
    line-height: 24px;
    color: #000;
}

.infocenter {
    display: flex;
    width: 447px;
    background: #a0a0a0;
    border-top: 1px solid #777;
}

.infocenter button {
    width: 24px;
}

.infocenter .collapse {
    width: 14px;
}

.infocenter input {
    width: 180px;
    padding-left: 3px;
    border: 1px solid #3a3a3a;
    background: #6e6c69;
    font-style: italic;
}

.infocenter input::placeholder,
.prompt input::placeholder {
    color: inherit;
    opacity: 1;
}

.infocenter input::placeholder {
    color: #d0d0d0;
}

.infocenter .signin {
    width: 121px;
    justify-content: flex-start;
    gap: 5px;
    padding: 0 4px;
}

.signin .caret {
    margin-left: auto;
}

.infocenter .connect {
    width: 38px;
    gap: 5px;
}

.infocenter .help {
    width: 44px;
    gap: 7px;
    padding-left: 10px;
}

.window-buttons {
    display: flex;
    width: 162px;
    justify-content: flex-end;
    padding-right: 1px;
}

.window-buttons button {
    width: 46px;
}

/* ribbon tabs */
.menu {
    flex: none;
    display: flex;
    height: 20px;
    padding-left: 46px;
    background: #545454;
    border-bottom: 1px solid #262a2d;
}

.menu a {
    height: 19px;
    padding: 0 8px 0 9px;
    line-height: 20px;
    color: #d8d8d8;
}

.menu .active {
    height: 18px;
    margin-top: 2px;
    padding: 0 9px 0 8px;
    line-height: 16px;
    border: 1px solid #2b2e31;
    border-bottom: none;
    background: #6a6a6a;
    color: #fff;
}

.menu button {
    gap: 5px;
    margin-left: 20px;
}

/* ribbon */
.ribbon {
    flex: none;
    display: flex;
    height: 100px;
    background: linear-gradient(#55585a, #3c3e40 50%, #37393a);
    border-bottom: 1px solid #777;
}

.panel {
    flex: none;
    display: flex;
    flex-direction: column;
    padding-bottom: 2px;
    background: #5b5b5b;
    border-right: 1px solid #3d4144;
    border-left: 1px solid #686868;
}

.panel-body {
    flex: 1;
    display: grid;
    grid-template-rows: repeat(3, 24px);
    padding-top: 4px;
}

.panel h2 {
    display: flex;
    align-items: center;
    justify-content: center;
    gap: 7px;
    height: 18px;
    background: linear-gradient(#454a4e, #525354);
}

.big {
    grid-row: 1 / 4;
    flex-direction: column;
    justify-content: flex-start;
    padding-top: 3px;
    line-height: 15px;
    text-align: center;
    white-space: normal;
}

.big svg {
    margin-bottom: 4px;
}

.big .caret {
    margin-top: 2px;
}

.small {
    height: 24px;
    gap: 5px;
    justify-content: flex-start;
}

.small .caret {
    margin-left: auto;
}

.stack {
    grid-row: 1 / 4;
    display: flex;
    flex-direction: column;
}

.launcher {
    margin-left: auto;
}

.draw {
    width: 226px;
}

.draw .panel-body {
    grid-template-columns: 40px 46px 52px 42px 34px;
    padding-left: 2px;
}

.draw .stack {
    padding-left: 4px;
}

.modify {
    width: 250px;
}

.modify .panel-body {
    grid-template-columns: 72px 68px 76px 16px;
    padding-left: 6px;
}

.modify .small:nth-child(4n + 3) {
    padding-right: 14px;
}

.annotation {
    width: 189px;
}

.annotation .panel-body {
    grid-template-columns: 44px 60px 67px;
    column-gap: 3px;
    padding-left: 1px;
}

.layers {
    width: 273px;
}

.layers .panel-body {
    grid-template-columns: 60px 208px;
    padding-left: 1px;
}

.layer-tools {
    grid-row: 1 / 4;
}

.combo {
    display: flex;
    align-items: center;
    height: 22px;
    padding: 0 2px 0 4px;
    border: 1px solid #2d3236;
    background: linear-gradient(#6b6b6b, #555);
}

.layer-tools .combo {
    gap: 3px;
    margin: 1px 0;
    padding-left: 3px;
}

.combo select {
    flex: 1;
    min-width: 0;
    appearance: none;
}

.layer-tools select {
    margin-left: 2px;
}

.swatch {
    width: 14px;
    height: 14px;
    background: #eefaf2;
    border: 1px solid #222;
}

.line {
    width: 64px;
    height: 1px;
    background: #eefaf2;
    margin-right: 2px;
}

.icon-row {
    display: flex;
    height: 24px;
    padding-left: 4px;
    gap: 8px;
}

.labelled {
    gap: 5px;
}

.block {
    width: 161px;
}

.block .panel-body {
    grid-template-columns: 42px 109px;
    column-gap: 3px;
}

.properties {
    width: 265px;
}

.properties .panel-body {
    grid-template-columns: 60px 199px;
    padding-left: 2px;
    column-gap: 1px;
}

.prop-rows {
    grid-row: 1 / 4;
    display: grid;
    grid-template-columns: 16px 1fr;
    grid-template-rows: repeat(3, 24px);
    align-items: center;
    column-gap: 2px;
}

.properties .swatch {
    width: 16px;
    height: 16px;
    margin: 0 10px 0 8px;
}

.properties h2 .caret {
    margin-right: -7px;
}

.properties h2 {
    padding: 0 4px 0 90px;
}

.groups {
    width: 69px;
}

.groups .panel-body {
    grid-template-columns: 42px 24px;
}

.groups .small,
.utilities .stack .small,
.clipboard .stack .small {
    justify-content: center;
}

.small.selected {
    border: 1px solid #2c3f6e;
    background: linear-gradient(#6f9fd0, #5a80bb 60%, #46589c);
}

.utilities {
    width: 97px;
}

.utilities .panel-body {
    grid-template-columns: 70px 24px;
}

.clipboard {
    width: 80px;
}

.clipboard .panel-body {
    grid-template-columns: 52px 24px;
}

.view {
    width: 62px;
}

.view .panel-body {
    grid-template-columns: 60px;
}

.view h2 {
    padding: 0 4px;
}

/* drawing tabs */
.file-tabs {
    flex: none;
    display: flex;
    height: 28px;
    padding: 3px 0 0 21px;
    background: linear-gradient(#333 0, #383838 24px, #5b5b5b 24px);
}

.file-tabs a {
    position: relative;
    display: flex;
    justify-content: space-between;
    align-items: center;
    gap: 4px;
    min-width: 123px;
    height: 21px;
    padding: 0 12px 0 10px;
    color: #b4b8c4;
    white-space: nowrap;
    isolation: isolate;
}

.file-tabs a::before {
    content: "";
    position: absolute;
    inset: 0 -8px 0 -2px;
    z-index: -1;
    background: linear-gradient(#646464, #525252);
    clip-path: polygon(0 100%, 4px 75%, 7px 25%, 10px 6%, 14px 0, calc(100% - 16px) 0, calc(100% - 11px) 8%, calc(100% - 8px) 25%, calc(100% - 4px) 75%, 100% 100%);
}

.file-tabs .active {
    color: #fff;
}

.file-tabs .active::before {
    background: linear-gradient(#868686, #6a6a6a);
}

.file-tabs i,
.add-tab,
.add-layout {
    position: relative;
    width: 8px;
    height: 8px;
}

.file-tabs i::before,
.file-tabs i::after {
    content: "";
    position: absolute;
    left: 3px;
    top: -1px;
    width: 2px;
    height: 10px;
    background: #393939;
    transform: rotate(45deg);
}

.file-tabs i::after {
    transform: rotate(-45deg);
}

.add-tab {
    width: 22px;
    height: 14px;
    margin: 5px 0 0 9px;
    border-radius: 2px 10px 2px 10px;
    background: #5c5c5c;
}

.add-tab::before,
.add-tab::after,
.add-layout::before,
.add-layout::after {
    content: "";
    position: absolute;
    width: 8px;
    height: 2px;
    background: #c4c8cc;
}

.add-tab::after,
.add-layout::after {
    transform: rotate(90deg);
}

.more-tabs {
    width: 26px;
    height: 20px;
    margin-left: auto;
}

/* drawing area */
.workspace {
    position: relative;
    flex: 1;
    min-height: 0;
    background: #212830;
    border-right: 7px solid #dae5f2;
}

.view-controls {
    padding: 6px 0 0 3px;
    color: #e6e8ea;
}

.plan {
    position: absolute;
    left: 174px;
    top: 315px;
    fill: none;
    stroke: #62615e;
}

.plan .solid {
    fill: #505050;
}

.plan .wall {
    stroke: #605f5e;
    stroke-width: 4;
}

.plan .bold {
    stroke-width: 2;
}

.doc-buttons {
    position: absolute;
    top: 10px;
    right: 11px;
    display: flex;
    gap: 9px;
}

.viewcube {
    position: absolute;
    top: 45px;
    right: 22px;
    width: 122px;
    height: 122px;
    display: flex;
    align-items: center;
    justify-content: center;
    border: 14px solid #4b4b4b;
    border-radius: 50%;
}

.compass {
    position: absolute;
    width: 20px;
    font: bold 22px/20px "Liberation Sans", sans-serif;
    color: #adadad;
    text-align: center;
}

.compass.n {
    top: -19px;
}

.compass.s {
    bottom: -19px;
}

.compass.w {
    left: -20px;
}

.compass.e {
    right: -19px;
}

.cube {
    width: 52px;
    height: 52px;
    border: 1px solid #8e9392;
    background: #aeb7b6;
}

.cube span {
    width: 32px;
    background: #a2a2a4;
    color: #4a4a4a;
    font-weight: bold;
    line-height: 32px;
}

.wcs {
    position: absolute;
    top: 193px;
    right: 59px;
    width: 48px;
    height: 18px;
    gap: 6px;
    border: 1px solid #777;
    border-radius: 4px;
    background: #9fa0a1;
    color: #4e4e4e;
    font: 11px/14px "Liberation Sans", sans-serif;
}

.navbar {
    position: absolute;
    top: 236px;
    right: 4px;
    border-radius: 4px;
    background: #666;
    outline: 1px solid #55585a;
}

.ucs {
    position: absolute;
    left: 16px;
    bottom: 11px;
}

.command-area {
    position: absolute;
    left: 410px;
    right: 403px;
    bottom: 0;
}

.history {
    display: flex;
    flex-direction: column;
    align-items: flex-start;
    gap: 5px;
    padding: 0 0 3px 60px;
    font-family: "Liberation Mono", monospace;
}

.history p {
    height: 15px;
    padding: 0 2px;
    line-height: 15px;
    background: #585858;
    border-radius: 2px;
    color: #e0e0e0;
}

.history .old {
    background: #4b4d4f;
    color: #b8b8b8;
}

.history .new {
    background: #666;
    color: #fff;
}

.command-line {
    display: flex;
    height: 26px;
    border: 1px solid #666;
    background: linear-gradient(#6b6b6b, #444);
}

.command-line > button {
    width: 21px;
}

.grip {
    width: 6px;
    margin: 4px 1px 4px 3px;
    background: radial-gradient(circle, #aaa 1px, transparent 1px) 0 0 / 3px 3px;
}

.prompt {
    flex: 1;
    display: flex;
    align-items: center;
    gap: 4px;
    padding: 0 3px 0 6px;
    background: #bcbdbf;
}

.prompt input {
    flex: 1;
    padding-left: 3px;
    color: #5c5c5c;
    font: italic 12px "Liberation Mono", monospace;
}

.up-caret {
    border: 4px solid transparent;
    border-top: none;
    border-bottom-color: #222;
}

/* bottom bar */
.bottombar {
    flex: none;
    display: flex;
    justify-content: space-between;
    height: 22px;
    background: #383838;
    border-top: 1px solid #53585c;
}

.layout-tabs {
    display: flex;
    gap: 3px;
    padding-left: 14px;
}

.layout-tabs a {
    position: relative;
    width: 62px;
    height: 17px;
    text-align: center;
    color: #b9bcc8;
    isolation: isolate;
}

.layout-tabs a::before {
    content: "";
    position: absolute;
    inset: 0 -2px;
    z-index: -1;
    background: #5e5e5e;
    clip-path: polygon(0 0, 100% 0, calc(100% - 3px) 50%, calc(100% - 6px) 88%, calc(100% - 9px) 100%, 9px 100%, 6px 88%, 3px 50%);
}

.layout-tabs .active {
    width: 54px;
    color: #fff;
    font-weight: bold;
}

.layout-tabs .active::before {
    background: #7c7c7c;
}

.add-layout {
    width: 22px;
    height: 16px;
    margin-left: 2px;
    background: #5a5a5a;
    border-radius: 6px 2px 10px 2px;
}

.statusbar {
    display: flex;
    background: #4c4c4c;
    border-top: 1px solid #777;
}

.group {
    display: flex;
    padding: 1px 1px 0;
    border-left: 1px solid #8a8a8a;
    border-right: 1px solid #3a3a3a;
}

.group button {
    width: 22px;
    padding-top: 3px;
    margin-right: 1px;
}

.group .drop {
    width: 16px;
}

.group .model {
    width: 45px;
    margin: 0;
}

.group .scale {
    width: 33px;
    gap: 7px;
}

.group .on {
    background: #5f8fc4;
}

.group.last {
    padding-right: 0;
    border-right: none;
}
```
